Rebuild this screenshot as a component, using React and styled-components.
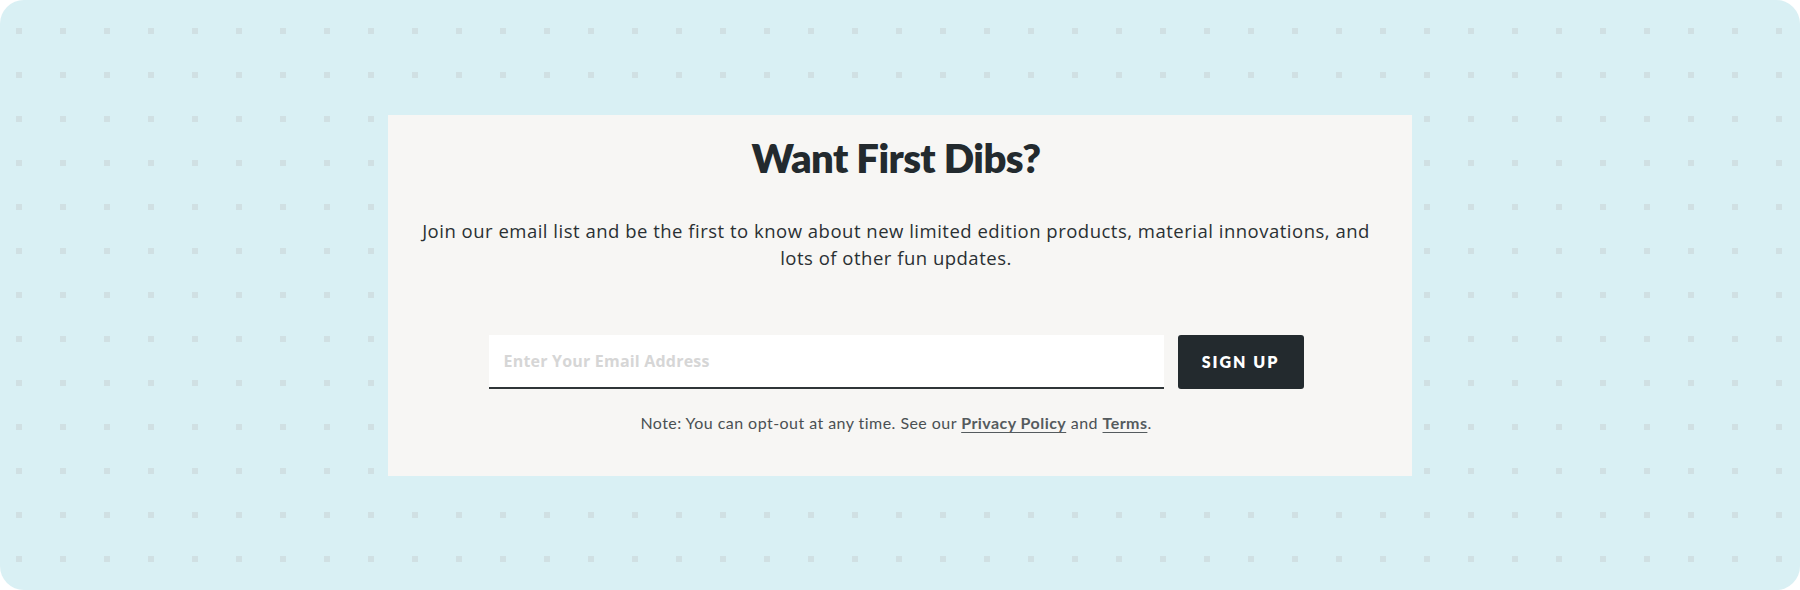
import React from 'react';
import styled, { createGlobalStyle } from 'styled-components';

const GlobalStyle = createGlobalStyle`
  html, body {
    margin: 0;
    padding: 0;
    background: #ffffff;
  }
  body {
    font-family: Lato, "Open Sans", sans-serif;
    -webkit-font-smoothing: antialiased;
  }
`

const Backdrop = styled.div`
  height: 590px;
  display: flex;
  align-items: center;
  justify-content: center;
  border-radius: 24px;
  background-color: #d9f0f4;
  background-image: conic-gradient(from 270deg at 6px 6px, #d0e0e3 25%, transparent 0);
  background-size: 44px 44px;
  background-position: 16px 28px;
`
const Card = styled.section`
  width: 1024px;
  box-sizing: border-box;
  padding: 19px 32px 41px 24px;
  background: #f7f6f4;
  display: flex;
  flex-direction: column;
  align-items: center;
  color: #232a2e;
`
const Title = styled.h2`
  margin: 0;
  font-size: 40px;
  line-height: 48px;
  font-weight: 800;
  letter-spacing: -0.6px;
`
const Intro = styled.p`
  margin: 35px 0 0;
  max-width: 968px;
  font-family: "Open Sans", Lato, sans-serif;
  font-size: 18.5px;
  line-height: 27.5px;
  letter-spacing: 0.5px;
  text-align: center;
  color: #2a3033;
`
const Form = styled.form`
  margin-top: 63px;
  display: flex;
  gap: 14px;
`
const EmailInput = styled.input`
  width: 675px;
  height: 54px;
  box-sizing: border-box;
  padding: 0 15px;
  border: none;
  border-bottom: 2px solid #2f3538;
  background: #ffffff;
  font-family: "Open Sans", Lato, sans-serif;
  font-size: 16px;
  font-weight: 700;
  letter-spacing: 0.2px;
  color: #232a2e;
  outline: none;
  &::placeholder {
    color: #d6d6d6;
  }
`
const SubmitButton = styled.button`
  width: 126px;
  height: 54px;
  border: none;
  border-radius: 3px;
  background: #232a2e;
  color: #ffffff;
  font-family: inherit;
  font-size: 16px;
  font-weight: 800;
  letter-spacing: 2px;
  text-transform: uppercase;
  cursor: pointer;
`
const Note = styled.p`
  margin: 22px 0 0;
  font-size: 16px;
  line-height: 24px;
  letter-spacing: 0.45px;
  color: #4a5053;
  a {
    color: #555b5e;
    font-weight: 700;
    text-decoration: underline;
    text-underline-offset: 3px;
  }
`

const App = function() {
  return (
    <>
      <GlobalStyle />
      <Backdrop>
        <Card>
          <Title>Want First Dibs?</Title>
          <Intro>Join our email list and be the first to know about new limited edition products, material innovations, and lots of other fun updates.</Intro>
          <Form onSubmit={e => e.preventDefault()}>
            <EmailInput type="email" placeholder="Enter Your Email Address" />
            <SubmitButton type="submit">Sign Up</SubmitButton>
          </Form>
          <Note>Note: You can opt-out at any time. See our <a href="#privacy">Privacy Policy</a> and <a href="#terms">Terms</a>.</Note>
        </Card>
      </Backdrop>
    </>
  );
};

export default App;
